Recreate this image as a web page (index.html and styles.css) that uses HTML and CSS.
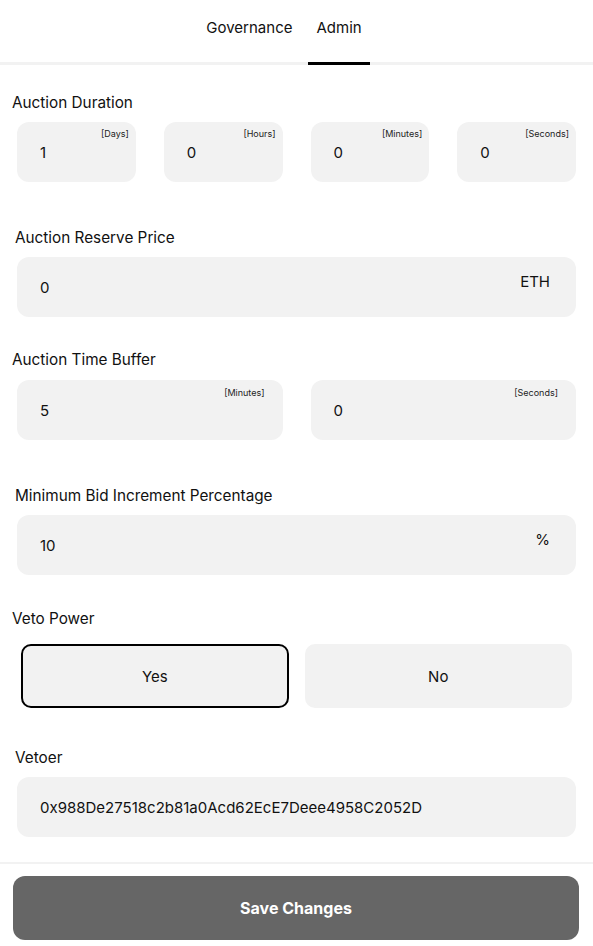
FILE: index.html
```html
<!DOCTYPE html>
<html>
<head>
<meta charset="utf-8">
<link rel="stylesheet" href="styles.css">
</head>
<body>
<header class="tabs">
  <div class="tab-list">
    <div class="tab">Governance</div>
    <div class="tab active">Admin</div>
  </div>
</header>
<main class="form">
  <section class="field f-duration">
    <div class="label">Auction Duration</div>
    <div class="row four">
      <div class="box"><span class="value">1</span><span class="unit near">[Days]</span></div>
      <div class="box"><span class="value">0</span><span class="unit near">[Hours]</span></div>
      <div class="box"><span class="value">0</span><span class="unit near">[Minutes]</span></div>
      <div class="box"><span class="value">0</span><span class="unit near">[Seconds]</span></div>
    </div>
  </section>
  <section class="field f-reserve">
    <div class="label shift">Auction Reserve Price</div>
    <div class="row">
      <div class="box"><span class="value">0</span><span class="suffix">ETH</span></div>
    </div>
  </section>
  <section class="field f-buffer">
    <div class="label">Auction Time Buffer</div>
    <div class="row two">
      <div class="box"><span class="value">5</span><span class="unit far">[Minutes]</span></div>
      <div class="box"><span class="value">0</span><span class="unit far">[Seconds]</span></div>
    </div>
  </section>
  <section class="field f-bid">
    <div class="label shift">Minimum Bid Increment Percentage</div>
    <div class="row">
      <div class="box"><span class="value">10</span><span class="suffix">%</span></div>
    </div>
  </section>
  <section class="field f-veto">
    <div class="label">Veto Power</div>
    <div class="veto-row">
      <div class="choice selected">Yes</div>
      <div class="choice">No</div>
    </div>
  </section>
  <section class="field f-vetoer">
    <div class="label shift">Vetoer</div>
    <div class="row">
      <div class="box"><span class="value">0x988De27518c2b81a0Acd62EcE7Deee4958C2052D</span></div>
    </div>
  </section>
</main>
<footer class="footer">
  <div class="save">Save Changes</div>
</footer>
</body>
</html>
```

FILE: styles.css
```css
* { box-sizing: border-box; }
html, body { margin: 0; padding: 0; background: #fff; }
body {
  font-family: "Inter", "Roboto", sans-serif;
  color: #111;
  width: 593px;
}
.tabs {
  border-bottom: 3px solid #f2f2f2;
  display: flex;
  justify-content: center;
  height: 65px;
}
.tab-list {
  display: flex;
  gap: 8px;
  margin-right: 25px;
}
.tab {
  font-size: 15px;
  padding: 18px 8px 0;
  height: 62px;
  color: #111;
}
.tab.active {
  border-bottom: 3px solid #000;
  height: 65px;
}
.form {
  padding: 0 12px;
}
.label {
  font-size: 15.3px;
  line-height: 20px;
  height: 20px;
  color: #111;
}
.label.shift { padding-left: 3px; }
.f-duration { margin-top: 28px; }
.f-reserve { margin-top: 46px; }
.f-buffer { margin-top: 33px; }
.f-bid { margin-top: 46px; }
.f-veto { margin-top: 34px; }
.f-vetoer { margin-top: 40px; }
.row {
  margin: 9px 5px 0;
}
.f-buffer .row { margin-top: 10px; }
.row.four {
  display: grid;
  grid-template-columns: repeat(4, 1fr);
  gap: 28px;
}
.row.two {
  display: grid;
  grid-template-columns: 1fr 1fr;
  gap: 28px;
}
.box {
  position: relative;
  background: #f2f2f2;
  border-radius: 12px;
  height: 60px;
  display: flex;
  align-items: center;
  padding-left: 23px;
}
.value {
  font-size: 15px;
  font-weight: 400;
  color: #111;
}
.unit {
  position: absolute;
  top: 6px;
  font-size: 9px;
  color: #222;
}
.unit.near { right: 7px; }
.unit.far { right: 18px; top: 7px; }
.suffix {
  position: absolute;
  right: 26px;
  top: 15px;
  font-size: 15px;
  font-weight: 400;
}
.veto-row {
  margin: 15px 9px 0;
  display: grid;
  grid-template-columns: 1fr 1fr;
  gap: 16px;
}
.choice {
  height: 64px;
  border-radius: 10px;
  background: #f2f2f2;
  display: flex;
  align-items: center;
  justify-content: center;
  font-size: 15px;
  font-weight: 400;
  border: 2px solid #f2f2f2;
}
.choice.selected {
  border-color: #000;
}
.footer {
  margin-top: 25px;
  border-top: 2px solid #f2f2f2;
  padding: 12px 14px 0 13px;
}
.save {
  height: 64px;
  border-radius: 12px;
  background: #666666;
  color: #fff;
  font-weight: 700;
  font-size: 16px;
  display: flex;
  align-items: center;
  justify-content: center;
}
```
